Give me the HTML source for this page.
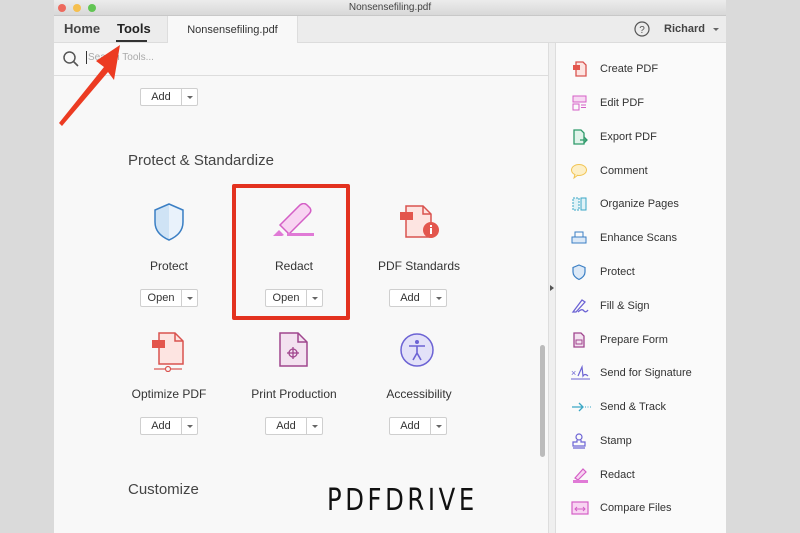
<!DOCTYPE html>
<html><head><meta charset="utf-8"><style>
*{margin:0;padding:0;box-sizing:border-box}
body{width:800px;height:533px;background:#dadada;position:relative;overflow:hidden;font-family:"Liberation Sans",sans-serif;color:#333}
.a{position:absolute}
.btn{position:absolute;width:58px;height:18px;border:1px solid #cfcfcf;border-radius:2px;background:#fff;font-size:11px;color:#333}
.btn span{position:absolute;left:0;width:40px;text-align:center;top:2px}
.btn i{position:absolute;left:40px;top:0;width:1px;height:16px;background:#cfcfcf}
.btn b{position:absolute;left:46px;top:7px;border:3px solid transparent;border-top:3px solid #666;border-bottom:0}
.lbl{position:absolute;width:140px;text-align:center;font-size:12px;color:#333}
.ri{position:absolute;left:600px;font-size:11px;color:#333}
</style></head><body>
<div class="a" style="left:54px;top:0;width:672px;height:533px;background:#f8f8f8"></div>
<div class="a" style="left:54px;top:0;width:672px;height:16px;background:linear-gradient(#ececec,#d8d8d8);border-bottom:1px solid #c8c8c8"></div>
<div class="a" style="left:58px;top:4px;width:8px;height:8px;border-radius:50%;background:#ed6a5e"></div>
<div class="a" style="left:73px;top:4px;width:8px;height:8px;border-radius:50%;background:#f5bf4f"></div>
<div class="a" style="left:88px;top:4px;width:8px;height:8px;border-radius:50%;background:#62c554"></div>
<div class="a" style="left:54px;top:2px;width:672px;text-align:center;font-size:10px;color:#444">Nonsensefiling.pdf</div>
<div class="a" style="left:54px;top:16px;width:672px;height:27px;background:#ececec;border-bottom:1px solid #dcdcdc"></div>
<div class="a" style="left:64px;top:21px;font-size:13px;font-weight:bold;color:#444">Home</div>
<div class="a" style="left:117px;top:21px;font-size:13px;font-weight:bold;color:#222">Tools</div>
<div class="a" style="left:116px;top:40px;width:31px;height:2px;background:#333"></div>
<div class="a" style="left:167px;top:16px;width:131px;height:27px;background:#f8f8f8;border-left:1px solid #ddd;border-right:1px solid #ddd;font-size:11px;text-align:center;padding-top:8px;color:#333">Nonsensefiling.pdf</div>
<svg class="a" style="left:634px;top:21px" width="16" height="16"><circle cx="8" cy="8" r="7" fill="none" stroke="#555" stroke-width="1.2"/><text x="8" y="12" font-size="10" text-anchor="middle" fill="#555" font-family="Liberation Sans">?</text></svg>
<div class="a" style="left:664px;top:23px;font-size:11px;font-weight:bold;color:#444">Richard</div>
<div class="a" style="left:713px;top:28px;border:3px solid transparent;border-top:3px solid #666;border-bottom:0"></div>
<div class="a" style="left:54px;top:75px;width:494px;height:1px;background:#ddd"></div>
<svg class="a" style="left:62px;top:50px" width="18" height="18"><circle cx="7.5" cy="7.5" r="5.5" fill="none" stroke="#555" stroke-width="1.5"/><line x1="11.5" y1="11.5" x2="16" y2="16" stroke="#555" stroke-width="1.6"/></svg>
<div class="a" style="left:86px;top:51px;width:1px;height:13px;background:#333"></div>
<div class="a" style="left:88px;top:52px;font-size:10px;color:#aaa">Search Tools...</div>
<div class="btn" style="left:140px;top:88px"><span>Add</span><i></i><b></b></div>
<div class="a" style="left:548px;top:43px;width:8px;height:490px;background:#efefef;border-left:1px solid #ddd;border-right:1px solid #ddd"></div>
<div class="a" style="left:550px;top:285px;border:3px solid transparent;border-left:4px solid #555;border-right:0"></div>
<div class="a" style="left:540px;top:345px;width:5px;height:112px;border-radius:3px;background:#bbb"></div>
<div class="a" style="left:556px;top:43px;width:170px;height:490px;background:#fafafa"></div>
<div class="a" style="left:128px;top:152px;font-size:15px;color:#444">Protect &amp; Standardize</div>
<div class="a" style="left:232px;top:184px;width:118px;height:136px;border:4px solid #e3321f;border-radius:2px"></div>
<svg class="a" style="left:152px;top:202px" width="34" height="40"><path d="M17 2 L31 8 V20 C31 30 24 35 17 38 C10 35 3 30 3 20 V8 Z" fill="#cfe3f5" stroke="#3b7fc4" stroke-width="1.5"/><path d="M17 3 V37 C24 34 30 29 30 20 V9 Z" fill="#e9f2fb"/></svg>
<svg class="a" style="left:270px;top:203px" width="48" height="36"><path d="M10 26 L30 6 Q34 3 37 6 L40 9 Q42 12 39 15 L19 35 Z" fill="#f8d4f2" stroke="#d45fc6" stroke-width="1.5" transform="translate(0,-4)"/><path d="M3 33 L9 27 L14 32 L12 33 Z" fill="#e07ad6"/><rect x="17" y="30" width="27" height="3" fill="#e07ad6"/></svg>
<svg class="a" style="left:397px;top:203px" width="44" height="40"><path d="M9 3 H26 L34 11 V34 H9 Z" fill="#fde4e1" stroke="#d9534f" stroke-width="1.5"/><path d="M26 3 V11 H34" fill="none" stroke="#d9534f" stroke-width="1.5"/><rect x="3" y="9" width="13" height="8" fill="#e3564d"/><circle cx="34" cy="27" r="8" fill="#e3564d"/><rect x="33" y="25" width="2" height="6" fill="#fff"/><rect x="33" y="22" width="2" height="2" fill="#fff"/></svg>
<div class="lbl" style="left:99px;top:259px">Protect</div>
<div class="lbl" style="left:224px;top:259px">Redact</div>
<div class="lbl" style="left:349px;top:259px">PDF Standards</div>
<div class="btn" style="left:140px;top:289px"><span>Open</span><i></i><b></b></div>
<div class="btn" style="left:265px;top:289px"><span>Open</span><i></i><b></b></div>
<div class="btn" style="left:389px;top:289px"><span>Add</span><i></i><b></b></div>
<svg class="a" style="left:148px;top:330px" width="42" height="42"><path d="M11 3 H27 L35 11 V34 H11 Z" fill="#fde4e1" stroke="#d9534f" stroke-width="1.5"/><path d="M27 3 V11 H35" fill="none" stroke="#d9534f" stroke-width="1.5"/><rect x="4" y="10" width="13" height="8" fill="#e3564d"/><line x1="6" y1="39" x2="17" y2="39" stroke="#d9534f" stroke-width="1.2"/><line x1="23" y1="39" x2="34" y2="39" stroke="#d9534f" stroke-width="1.2"/><circle cx="20" cy="39" r="2.5" fill="none" stroke="#d9534f" stroke-width="1.2"/></svg>
<svg class="a" style="left:276px;top:330px" width="36" height="40"><path d="M4 3 H22 L31 12 V36 H4 Z" fill="#f3e2f0" stroke="#a0468e" stroke-width="1.5"/><path d="M22 3 V12 H31" fill="none" stroke="#a0468e" stroke-width="1.5"/><circle cx="17" cy="23" r="4" fill="none" stroke="#a0468e" stroke-width="1.3"/><line x1="11" y1="23" x2="23" y2="23" stroke="#a0468e" stroke-width="1.3"/><line x1="17" y1="17" x2="17" y2="29" stroke="#a0468e" stroke-width="1.3"/></svg>
<svg class="a" style="left:398px;top:331px" width="38" height="38"><circle cx="19" cy="19" r="16" fill="#e3e1f8" stroke="#6c63d4" stroke-width="1.5"/><circle cx="19" cy="11" r="2" fill="#6c63d4"/><path d="M11 15 H27 M19 15 V22 L15 29 M19 22 L23 29" fill="none" stroke="#6c63d4" stroke-width="1.6"/></svg>
<div class="lbl" style="left:99px;top:387px">Optimize PDF</div>
<div class="lbl" style="left:224px;top:387px">Print Production</div>
<div class="lbl" style="left:349px;top:387px">Accessibility</div>
<div class="btn" style="left:140px;top:417px"><span>Add</span><i></i><b></b></div>
<div class="btn" style="left:265px;top:417px"><span>Add</span><i></i><b></b></div>
<div class="btn" style="left:389px;top:417px"><span>Add</span><i></i><b></b></div>
<div class="a" style="left:128px;top:481px;font-size:15px;color:#444">Customize</div>
<div class="a" style="left:327px;top:483px;font-size:30px;letter-spacing:4px;color:#111;font-family:'DejaVu Sans Condensed','Liberation Sans Narrow',sans-serif;transform:scaleX(0.9);transform-origin:left">PDFDRIVE</div>
<svg class="a" style="left:0;top:0" width="200" height="140"><polygon points="120,45 96,61 104,67 59,123 62,126 108,72 114,80" fill="#ec3b22"/></svg>
<svg class="a" style="left:570px;top:60px" width="18" height="18"><path d="M6 2 H13 L16 5 V16 H6 Z" fill="#fde4e1" stroke="#d9534f" stroke-width="1.3"/><rect x="3" y="5" width="7" height="5" fill="#e3564d"/></svg>
<div class="ri" style="top:63px">Create PDF</div>
<svg class="a" style="left:570px;top:94px" width="18" height="18"><rect x="3" y="2" width="13" height="6" fill="#f7d9f3" stroke="#d45fc6"/><rect x="3" y="10" width="6" height="6" fill="none" stroke="#d45fc6"/><path d="M11 11H16M11 13.5H16" stroke="#d45fc6"/></svg>
<div class="ri" style="top:97px">Edit PDF</div>
<svg class="a" style="left:570px;top:128px" width="18" height="18"><path d="M4 2 H11 L14 5 V16 H4 Z" fill="#e1f3ea" stroke="#2e9a6a" stroke-width="1.3"/><path d="M10 12 H17 M14 9 L17 12 L14 15" fill="none" stroke="#2e9a6a" stroke-width="1.3"/></svg>
<div class="ri" style="top:131px">Export PDF</div>
<svg class="a" style="left:570px;top:162px" width="18" height="18"><ellipse cx="9" cy="8" rx="7.5" ry="5.5" fill="#fdefc7" stroke="#f1c453"/><path d="M5 12 L4 16 L8 13" fill="#fdefc7" stroke="#f1c453"/></svg>
<div class="ri" style="top:165px">Comment</div>
<svg class="a" style="left:570px;top:195px" width="18" height="18"><rect x="3" y="3" width="6" height="12" fill="#dff2f7" stroke="#3aa7c5" stroke-dasharray="2 1"/><rect x="11" y="3" width="5" height="12" fill="#dff2f7" stroke="#3aa7c5"/></svg>
<div class="ri" style="top:198px">Organize Pages</div>
<svg class="a" style="left:570px;top:229px" width="18" height="18"><rect x="2" y="8" width="14" height="6" fill="#dce9f7" stroke="#3b7fc4"/><rect x="5" y="3" width="8" height="5" fill="none" stroke="#3b7fc4"/></svg>
<div class="ri" style="top:232px">Enhance Scans</div>
<svg class="a" style="left:570px;top:263px" width="18" height="18"><path d="M9 2 L15 4.5 V9 C15 13 12 15 9 16.5 C6 15 3 13 3 9 V4.5 Z" fill="#dce9f7" stroke="#3b7fc4" stroke-width="1.2"/></svg>
<div class="ri" style="top:266px">Protect</div>
<svg class="a" style="left:570px;top:297px" width="20" height="18"><path d="M3 15 L12 3 L15 5 L6 15 Z M8 15 Q12 11 14 14 Q16 16 18 13" fill="none" stroke="#6c63d4" stroke-width="1.3"/></svg>
<div class="ri" style="top:300px">Fill &amp; Sign</div>
<svg class="a" style="left:570px;top:331px" width="18" height="18"><path d="M4 2 H11 L14 5 V16 H4 Z" fill="#f3e2f0" stroke="#a0468e" stroke-width="1.3"/><rect x="6" y="9" width="6" height="4" fill="none" stroke="#a0468e"/></svg>
<div class="ri" style="top:334px">Prepare Form</div>
<svg class="a" style="left:570px;top:364px" width="22" height="18"><text x="1" y="12" font-size="9" fill="#6c63d4" font-family="Liberation Sans">×</text><path d="M8 12 L12 3 L13 12 Q15 9 18 12" fill="none" stroke="#6c63d4" stroke-width="1.2"/><line x1="1" y1="15" x2="20" y2="15" stroke="#6c63d4"/></svg>
<div class="ri" style="top:367px">Send for Signature</div>
<svg class="a" style="left:570px;top:398px" width="22" height="18"><path d="M2 9 H13 M9 5 L13 9 L9 13" fill="none" stroke="#3aa7c5" stroke-width="1.3"/><path d="M15 9H21" stroke="#3aa7c5" stroke-dasharray="1 1.5"/></svg>
<div class="ri" style="top:401px">Send &amp; Track</div>
<svg class="a" style="left:570px;top:432px" width="18" height="18"><circle cx="9" cy="5" r="3" fill="none" stroke="#6c63d4" stroke-width="1.2"/><path d="M7 8 V10 H3 V14 H15 V10 H11 V8 M3 16H15" fill="none" stroke="#6c63d4" stroke-width="1.2"/></svg>
<div class="ri" style="top:435px">Stamp</div>
<svg class="a" style="left:570px;top:466px" width="20" height="18"><path d="M5 12 L13 3 L16 6 L8 14 Z" fill="#f8d4f2" stroke="#d45fc6" stroke-width="1.2"/><rect x="3" y="14" width="15" height="3" fill="#e07ad6"/></svg>
<div class="ri" style="top:469px">Redact</div>
<svg class="a" style="left:570px;top:499px" width="20" height="18"><rect x="2" y="3" width="16" height="12" fill="#f8d4f2" stroke="#d45fc6" stroke-width="1.2"/><path d="M5 10H15M7 8L5 10L7 12M13 8L15 10L13 12" fill="none" stroke="#d45fc6"/></svg>
<div class="ri" style="top:502px">Compare Files</div>
</body></html>
